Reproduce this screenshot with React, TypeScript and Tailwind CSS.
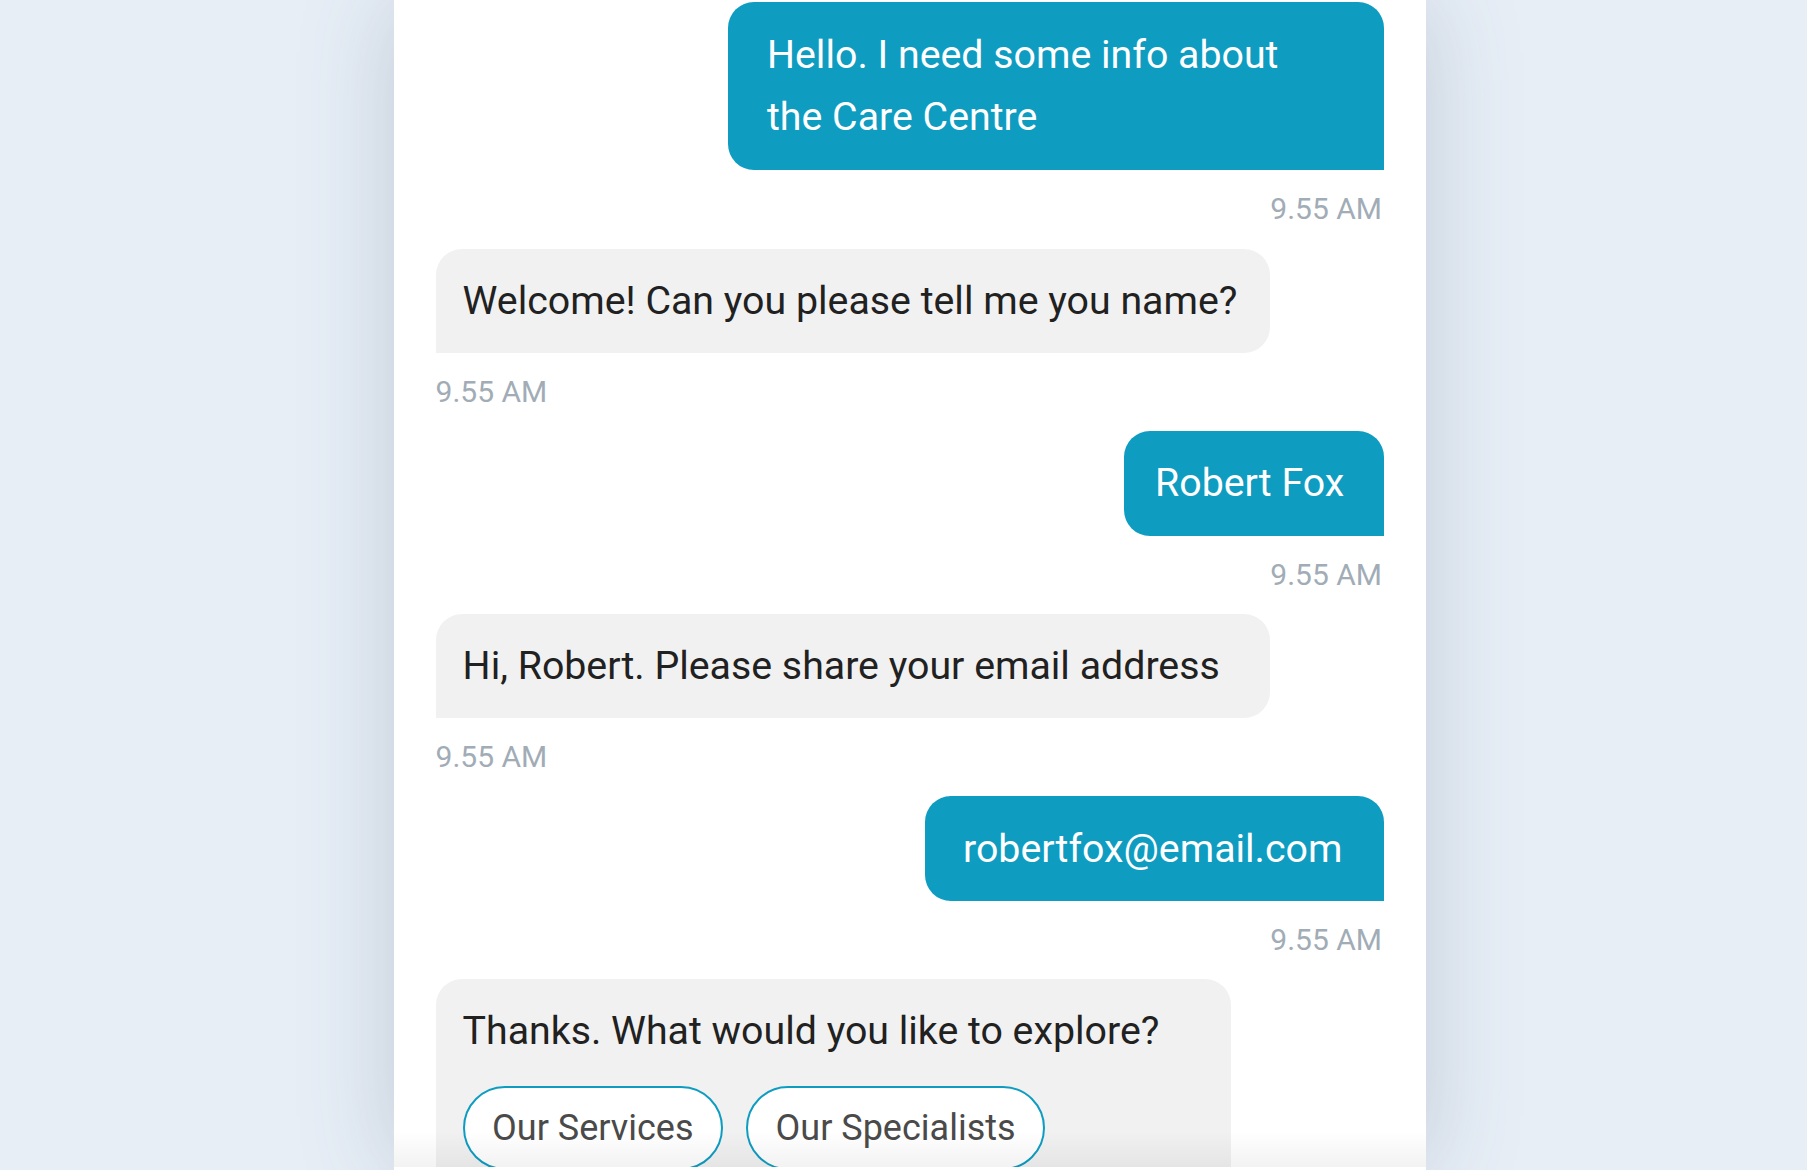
import React from "react";

type Msg =
  | { from: "user"; lines: string[]; box: string }
  | { from: "bot"; lines: string[]; box: string; options?: string[] };

const messages: Msg[] = [
  { from: "user", lines: ["Hello. I need some info about", "the Care Centre"], box: "w-[656px] py-[22.2px] pl-[39px]" },
  { from: "bot", lines: ["Welcome! Can you please tell me you name?"], box: "w-[834px]" },
  { from: "user", lines: ["Robert Fox"], box: "w-[260px] py-[21.5px] pl-[31px]" },
  { from: "bot", lines: ["Hi, Robert. Please share your email address"], box: "w-[834px]" },
  { from: "user", lines: ["robertfox@email.com"], box: "w-[459px] py-[21.5px] pl-[38px]" },
  {
    from: "bot",
    lines: ["Thanks. What would you like to explore?"],
    box: "w-[795px]",
    options: ["Our Services", "Our Specialists"],
  },
];

function Time({ right }: { right?: boolean }) {
  return (
    <div
      className={
        right
          ? "mt-[21px] mb-[21.2px] self-end pr-[2px] text-[30px] leading-[36px] text-[#a1acb6]"
          : "mt-[21px] mb-[21.2px] self-start text-[30px] leading-[36px] text-[#a1acb6]"
      }
    >
      9.55 AM
    </div>
  );
}

export default function App() {
  return (
    <div className="h-[1170px] w-full overflow-hidden bg-[#e7eef6] pl-[394px] font-[Roboto,sans-serif]">
      {/* chat panel, 1032px wide, shadow bleeds into the page bg */}
      <div className="relative h-full w-[1032px] overflow-hidden bg-white shadow-[0_0_90px_rgba(60,80,110,0.22)]">
        <div className="flex flex-col pl-[41.6px] pr-[42px] pt-[2px]">
          {messages.map((m, i) =>
            m.from === "user" ? (
              <React.Fragment key={i}>
                <div
                  className={`self-end rounded-[26px] rounded-br-none bg-[#0e9cc1] text-[39.3px] leading-[62px] text-white ${m.box}`}
                >
                  {m.lines.map((l) => (
                    <div key={l}>{l}</div>
                  ))}
                </div>
                <Time right />
              </React.Fragment>
            ) : (
              <React.Fragment key={i}>
                <div
                  className={`self-start rounded-[26px] rounded-bl-none bg-[#f1f1f1] py-[21px] pl-[27px] text-[39.3px] leading-[62px] text-[#212121] ${m.box}`}
                >
                  {m.lines.map((l) => (
                    <div key={l}>{l}</div>
                  ))}
                  {m.options && (
                    <div className="mt-[24px] flex gap-[23px]">
                      {m.options.map((o) => (
                        <button
                          key={o}
                          className="h-[84px] rounded-full border-[2.5px] border-[#0e9cc1] bg-white px-[27.5px] text-[36px] text-[#4a4a4a]"
                        >
                          {o}
                        </button>
                      ))}
                    </div>
                  )}
                </div>
                {!m.options && <Time />}
              </React.Fragment>
            )
          )}
        </div>

        {/* fade under the composer edge */}
        <div className="absolute inset-x-0 bottom-0">
          <div className="h-[36px] bg-linear-to-b from-transparent to-black/[0.05]" />
          <div className="h-[3px] bg-white" />
        </div>
      </div>
    </div>
  );
}
